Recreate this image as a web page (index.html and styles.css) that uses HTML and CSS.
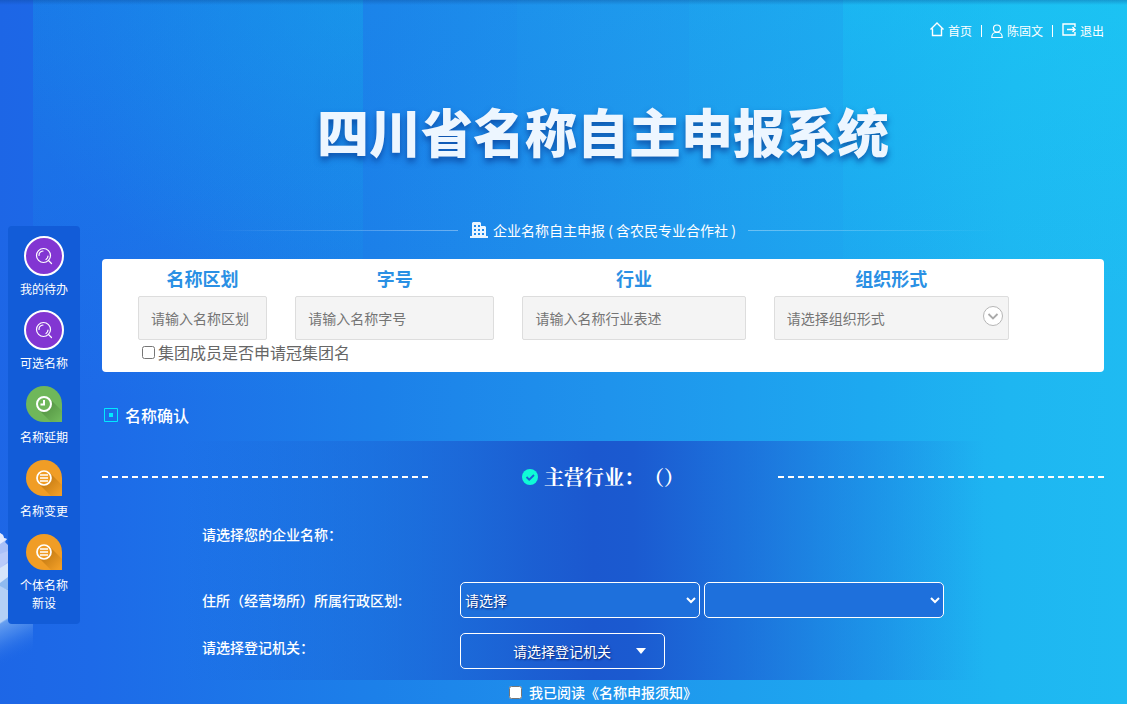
FILE: index.html
```html
<!DOCTYPE html>
<html lang="zh-CN">
<head>
    <meta charset="UTF-8">
    <meta name="viewport" content="width=device-width, initial-scale=1.0">
    <title>四川省名称自主申报系统</title>
    <link rel="stylesheet" href="styles.css">
</head>
<body>
    <svg class="cloud" viewBox="0 0 33 140" aria-hidden="true">
        <defs>
            <linearGradient id="cloudFade" x1="0" y1="0" x2="0.3" y2="1">
                <stop offset="0" stop-color="#84b4f4" stop-opacity="0.9"/>
                <stop offset="0.4" stop-color="#5f9bf0" stop-opacity="0.5"/>
                <stop offset="0.9" stop-color="#1d68e6" stop-opacity="0"/>
            </linearGradient>
        </defs>
        <path d="M0 5l3 2 1 3 3 1-2 3 3 3v22l-8 6z" fill="#a9c0f8"/>
        <path d="M0 5l3 2 1 3 3 1-4 3-3 2z" fill="#e4ebfe"/>
        <path d="M0 26l8-3v10l-8 8z" fill="#b9cbfa"/>
        <path d="M0 40l8-5v15l-8 7z" fill="#d6e5fb"/>
        <path d="M0 55l8-6v13l-8-3z" fill="#8fbaf0"/>
        <path d="M0 58l8 4v29l-8 5z" fill="#b4d0f6"/>
        <path d="M0 95l8-5h25v50H0z" fill="url(#cloudFade)"/>
    </svg>

    <div class="page">
        <aside class="sidebar">
            <a href="#" class="side-item">
                <span class="side-icon">
                    <svg width="40" height="40" viewBox="0 0 40 40">
                        <circle cx="20" cy="20" r="19" fill="#8236d2" stroke="#fff" stroke-width="2"/>
                        <g fill="none" stroke="#fff" stroke-width="1.2" stroke-linecap="round">
                            <circle cx="19.500" cy="19.500" r="7"/>
                            <path d="M15 19.500a4.500 4.500 0 0 1 4-4.500M24 20a4.500 4.500 0 0 1-2 3.500M24.500 24.500l3 3"/>
                        </g>
                    </svg>
                </span>
                <span class="side-label">我的待办</span>
            </a>
            <a href="#" class="side-item">
                <span class="side-icon">
                    <svg width="40" height="40" viewBox="0 0 40 40">
                        <circle cx="20" cy="20" r="19" fill="#8236d2" stroke="#fff" stroke-width="2"/>
                        <g fill="none" stroke="#fff" stroke-width="1.2" stroke-linecap="round">
                            <circle cx="19.500" cy="19.500" r="7"/>
                            <path d="M15 19.500a4.500 4.500 0 0 1 4-4.500M24 20a4.500 4.500 0 0 1-2 3.500M24.500 24.500l3 3"/>
                        </g>
                    </svg>
                </span>
                <span class="side-label">可选名称</span>
            </a>
            <a href="#" class="side-item">
                <span class="side-icon">
                    <svg width="36" height="36" viewBox="0 0 36 36">
                        <defs>
                            <linearGradient id="greenShade" x1="0.3" y1="0.3" x2="0.9" y2="0.9">
                                <stop offset="0" stop-color="#559544"/>
                                <stop offset="1" stop-color="#6fb75a"/>
                            </linearGradient>
                        </defs>
                        <path d="M18 0a18 18 0 0 1 18 18v18H18a18 18 0 0 1 0-36z" fill="#6fb75a"/>
                        <path d="M23.500 12.500L36 25v11H25L12.500 23.500z" fill="url(#greenShade)"/>
                        <circle cx="18" cy="18" r="7" fill="#6fb75a" stroke="#fff" stroke-width="2"/>
                        <path d="M18 14v4.500h-3.500" fill="none" stroke="#fff" stroke-width="2"/>
                    </svg>
                </span>
                <span class="side-label">名称延期</span>
            </a>
            <a href="#" class="side-item">
                <span class="side-icon">
                    <svg width="36" height="36" viewBox="0 0 36 36">
                        <defs>
                            <linearGradient id="orangeShade" x1="0.3" y1="0.3" x2="0.9" y2="0.9">
                                <stop offset="0" stop-color="#c57c14"/>
                                <stop offset="1" stop-color="#f09d26"/>
                            </linearGradient>
                        </defs>
                        <path d="M18 0a18 18 0 0 1 18 18v18H18a18 18 0 0 1 0-36z" fill="#f09d26"/>
                        <path d="M23.500 12.500L36 25v11H25L12.500 23.500z" fill="url(#orangeShade)"/>
                        <circle cx="18" cy="18" r="7" fill="#f09d26" stroke="#fff" stroke-width="1.700"/>
                        <path d="M14 15h8M14 18h8M14 21h8" stroke="#fff" stroke-width="1.700"/>
                    </svg>
                </span>
                <span class="side-label">名称变更</span>
            </a>
            <a href="#" class="side-item">
                <span class="side-icon">
                    <svg width="36" height="36" viewBox="0 0 36 36">
                        <path d="M18 0a18 18 0 0 1 18 18v18H18a18 18 0 0 1 0-36z" fill="#f09d26"/>
                        <path d="M23.500 12.500L36 25v11H25L12.500 23.500z" fill="url(#orangeShade)"/>
                        <circle cx="18" cy="18" r="7" fill="#f09d26" stroke="#fff" stroke-width="1.700"/>
                        <path d="M14 15h8M14 18h8M14 21h8" stroke="#fff" stroke-width="1.700"/>
                    </svg>
                </span>
                <span class="side-label">个体名称新设</span>
            </a>
        </aside>

        <main class="content">
            <nav class="top-nav">
                <a href="#">
                    <svg width="14" height="18" viewBox="0 0 14 18" fill="none" stroke="#fff" stroke-width="1.400">
                        <path d="M.5 7.500L7 1l6.500 6.500M2.500 6.500V13.500h9V6.500"/>
                    </svg>
                    首页
                </a>
                <span class="sep"></span>
                <a href="#">
                    <svg width="12" height="18" viewBox="0 0 12 18" fill="none" stroke="#fff" stroke-width="1.200">
                        <circle cx="6" cy="6.500" r="3.500"/>
                        <path d="M.8 15.500c0-3 1.700-5 3.700-5h3c2 0 3.700 2 3.700 5z"/>
                    </svg>
                    陈固文
                </a>
                <span class="sep"></span>
                <a href="#">
                    <svg width="14" height="18" viewBox="0 0 14 18" fill="none" stroke="#fff" stroke-width="1.400">
                        <path d="M13 5V2H1v11h12v-3M5 7.500h8M10.500 5l2.500 2.500-2.500 2.500"/>
                    </svg>
                    退出
                </a>
            </nav>

            <h1 class="title">四川省名称自主申报系统</h1>

            <div class="subtitle">
                <span class="line line-left"></span>
                <svg width="18" height="16" viewBox="0 0 18 16">
                    <path fill="#eaf5ff" fill-rule="evenodd" d="M2 14V1l1-1h7l1 1v3h4l1 1v9h2v2H0v-2zM4 3v2h2V3zM8 3v2h2V3zM4 7v2h2V7zM8 7v2h2V7zM12 7v2h2V7zM4 11v2h2v-2zM8 11v2h2v-2zM12 11v2h2v-2z"/>
                </svg>
                <span class="subtitle-text">企业名称自主申报 ( 含农民专业合作社 )</span>
                <span class="line line-right"></span>
            </div>

            <form class="panel">
                <div class="fields">
                    <div class="field">
                        <label for="quhua">名称区划</label>
                        <input type="text" id="quhua" placeholder="请输入名称区划">
                    </div>
                    <div class="field">
                        <label for="zihao">字号</label>
                        <input type="text" id="zihao" placeholder="请输入名称字号">
                    </div>
                    <div class="field">
                        <label for="hangye">行业</label>
                        <input type="text" id="hangye" placeholder="请输入名称行业表述">
                    </div>
                    <div class="field">
                        <label for="zuzhi">组织形式</label>
                        <div class="select-box">
                            <select id="zuzhi">
                                <option>请选择组织形式</option>
                            </select>
                            <svg class="select-arrow" width="20" height="20" viewBox="0 0 20 20" fill="none">
                                <circle cx="10" cy="10" r="9.500" fill="#fff" stroke="#b5b5b5"/>
                                <path d="M5.500 8l4.500 4.500L14.500 8" stroke="#aaa" stroke-width="1.800"/>
                            </svg>
                        </div>
                    </div>
                </div>
                <div class="group-check">
                    <input type="checkbox" id="jituan">
                    <label for="jituan">集团成员是否申请冠集团名</label>
                </div>
            </form>

            <h2 class="section-title">
                <svg width="14" height="14" viewBox="0 0 14 14">
                    <path d="M.5.5h13v13H.5z" fill="none" stroke="#00eaff"/>
                    <path d="M5 5h4v4H5z" fill="#00eaff"/>
                </svg>
                名称确认
            </h2>

            <section class="confirm">
                <div class="industry">
                    <span class="dash"></span>
                    <h3>
                        <svg width="16" height="16" viewBox="0 0 16 16">
                            <circle cx="8" cy="8" r="8" fill="#0ffbd6"/>
                            <path d="M4.500 8l2.700 2.700L12 6" fill="none" stroke="#1c5fd3" stroke-width="1.800"/>
                        </svg>
                        主营行业：（）
                    </h3>
                    <span class="dash"></span>
                </div>

                <div class="row row-name">
                    <span class="row-label">请选择您的企业名称：</span>
                </div>
                <div class="row row-area">
                    <label class="row-label" for="area1">住所（经营场所）所属行政区划:</label>
                    <div class="selects">
                        <select id="area1">
                            <option>请选择</option>
                        </select>
                        <select id="area2" aria-label="区县">
                            <option></option>
                        </select>
                    </div>
                </div>
                <div class="row row-organ">
                    <label class="row-label" for="organ">请选择登记机关：</label>
                    <button type="button" id="organ">
                        请选择登记机关
                        <svg width="10" height="6" viewBox="0 0 10 6">
                            <path d="M0 0h10L5 6z" fill="#fff"/>
                        </svg>
                    </button>
                </div>
            </section>

            <div class="agree">
                <input type="checkbox" id="agree">
                <label for="agree">我已阅读《名称申报须知》</label>
            </div>
        </main>
    </div>
</body>
</html>
```

FILE: styles.css
```css
* {
    box-sizing: border-box;
}

body {
    margin: 0;
    min-height: 100vh;
    font-family: "Noto Sans CJK SC", sans-serif;
    font-size: 14px;
    color: #fff;
    background:
        linear-gradient(180deg, rgba(10, 60, 130, 0.3), transparent 5px),
        radial-gradient(ellipse at 100% 0, rgba(20, 190, 235, 0.25), transparent 80%) 33px 0 / 330px 260px no-repeat,
        linear-gradient(180deg, rgba(20, 150, 235, 0.35), transparent) 33px 0 / 330px 400px no-repeat,
        linear-gradient(180deg, rgba(20, 170, 240, 0.12), transparent) 363px 0 / 154px 300px no-repeat,
        linear-gradient(180deg, rgba(20, 190, 240, 0.12), transparent) 517px 0 / 172px 260px no-repeat,
        linear-gradient(180deg, rgba(22, 200, 240, 0.16), transparent) 689px 0 / 154px 260px no-repeat,
        linear-gradient(180deg, rgba(22, 210, 245, 0.35), transparent 300px) 843px 0 / 100% 300px no-repeat,
        linear-gradient(91deg, #1d66e6 0%, #1d6ae8 9%, #1c80e9 34%, #1f93ec 54%, #1da9f0 77%, #1eb6f1 89%, #1fbbf2 100%);
}

a {
    color: #fff;
    text-decoration: none;
}

input,
select,
button {
    font-family: inherit;
    font-size: 14px;
}

svg {
    flex-shrink: 0;
}

.cloud {
    position: absolute;
    left: 0;
    top: 528px;
    width: 33px;
    height: 140px;
}

.page {
    display: flex;
    align-items: flex-start;
    gap: 22px;
    padding: 0 23px 0 8px;
    position: relative;
}

/* left menu */
.sidebar {
    flex: 0 0 72px;
    margin-top: 226px;
    padding: 10px 10px 12px;
    display: flex;
    flex-direction: column;
    gap: 12px;
    background: #125cd8;
    border-radius: 4px;
}

.side-item {
    display: flex;
    flex-direction: column;
    align-items: center;
    gap: 4px;
}

.side-icon {
    height: 40px;
    display: flex;
    align-items: center;
}

.side-label {
    width: 48px;
    font-size: 12px;
    line-height: 18px;
    text-align: center;
}

.content {
    flex: 1;
    min-width: 0;
}

.top-nav {
    display: flex;
    justify-content: flex-end;
    align-items: center;
    gap: 9px;
    padding-top: 22px;
    font-size: 12px;
    line-height: 18px;
}

.top-nav a {
    display: flex;
    align-items: center;
    gap: 4px;
}

.sep {
    width: 1px;
    height: 12px;
    background: #fff;
}

.title {
    margin: 51px 0 0;
    font-size: 52px;
    line-height: 80px;
    font-weight: 900;
    text-align: center;
    color: #edf6ff;
    text-shadow: 0 4px 6px rgba(8, 62, 150, 0.75);
}

.subtitle {
    display: flex;
    justify-content: center;
    align-items: center;
    margin-top: 49px;
    height: 20px;
}

.subtitle-text {
    margin-left: 5px;
    line-height: 20px;
}

.line {
    width: 250px;
    height: 1px;
}

.line-left {
    margin-right: 12px;
    background: linear-gradient(90deg, transparent, rgba(255, 255, 255, 0.35));
}

.line-right {
    margin-left: 12px;
    background: linear-gradient(270deg, transparent, rgba(255, 255, 255, 0.35));
}

/* name form */
.panel {
    margin-top: 19px;
    padding: 6px 95px 7px 36px;
    background: #fff;
    border-radius: 4px;
}

.fields {
    display: grid;
    grid-template-columns: 129fr 199fr 223fr 235fr;
    gap: 28px;
}

.field label {
    display: block;
    margin-bottom: 5px;
    font-size: 18px;
    line-height: 26px;
    font-weight: bold;
    text-align: center;
    color: #2a90e4;
}

.field input,
.field select {
    display: block;
    width: 100%;
    height: 44px;
    padding: 0 12px;
    border: 1px solid #ddd;
    border-radius: 2px;
    background: #f4f4f4;
    color: #757575;
}

.field select {
    appearance: none;
}

.select-box {
    position: relative;
}

.select-arrow {
    position: absolute;
    right: 6px;
    top: 10px;
    pointer-events: none;
}

.group-check {
    display: flex;
    align-items: center;
    gap: 3px;
    padding-left: 4px;
    font-size: 16px;
    line-height: 25px;
    color: #666;
}

.group-check input,
.agree input {
    width: 13px;
    height: 13px;
    margin: 0;
}

.section-title {
    display: flex;
    align-items: center;
    gap: 7px;
    margin: 31px 0 0;
    padding: 0 2px 14px;
    font-size: 16px;
    line-height: 24px;
    font-weight: 500;
}

/* confirm area */
.confirm {
    padding-bottom: 11px;
    background: linear-gradient(90deg, transparent 8%, rgba(27, 92, 210, 0.4) 27%, rgba(27, 90, 208, 0.9) 43%, #1b58cf 49%, #1b5ad0 53%, rgba(27, 92, 210, 0.75) 61%, rgba(28, 100, 214, 0.4) 74%, transparent 88%);
}

.industry {
    display: flex;
    align-items: center;
    padding-top: 18px;
}

.industry h3 {
    flex: 0 0 35%;
    display: flex;
    justify-content: center;
    align-items: center;
    gap: 6px;
    margin: 0;
    font-family: "Noto Serif CJK SC", "Noto Sans CJK SC", serif;
    font-size: 20px;
    line-height: 36px;
    font-weight: bold;
    text-spacing-trim: space-all;
}

.dash {
    flex: 1;
    height: 2px;
    background: repeating-linear-gradient(90deg, #fff 0 6px, transparent 6px 10px);
}

.row {
    display: grid;
    grid-template-columns: 258px 1fr;
    align-items: center;
    padding-left: 100px;
}

.row-label {
    font-weight: 500;
}

.row-name {
    height: 78px;
}

.row-area {
    height: 54px;
}

.row-organ {
    margin-top: 6px;
    height: 36px;
}

.row-organ .row-label {
    align-self: start;
    line-height: 28px;
}

.selects {
    display: flex;
    gap: 4px;
}

.selects select {
    width: 240px;
    height: 36px;
    border: 1px solid #fff;
    border-radius: 5px;
    background: #1e70dc;
    color: #fff;
    text-shadow: 1px 1px 2px #06206e;
}

.row-organ button {
    display: flex;
    justify-content: flex-end;
    align-items: center;
    gap: 25px;
    width: 205px;
    height: 36px;
    padding: 0 18px;
    border: 1px solid #fff;
    border-radius: 5px;
    background: transparent;
    color: #fff;
    text-shadow: 1px 1px 2px #06206e;
}

.agree {
    display: flex;
    justify-content: center;
    align-items: center;
    gap: 7px;
    height: 24px;
    font-weight: 500;
}
```
